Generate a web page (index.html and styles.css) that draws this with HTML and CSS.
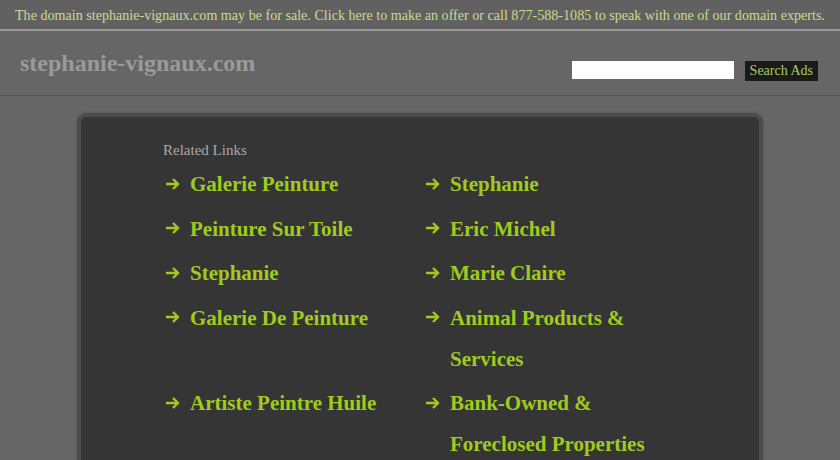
FILE: index.html
```html
<!DOCTYPE html>
<html>
<head>
<meta charset="utf-8">
<link rel="stylesheet" href="styles.css">
</head>
<body>
<div class="topbar">The domain stephanie-vignaux.com may be for sale. Click here to make an offer or call 877-588-1085 to speak with one of our domain experts.</div>
<div class="header">
  <div class="domain">stephanie-vignaux.com</div>
  <form class="search">
    <input class="search-input" type="text">
    <button class="search-btn" type="button">Search Ads</button>
  </form>
</div>
<div class="main">
  <div class="box">
    <div class="related">Related Links</div>
    <div class="cols">
      <ul class="links">
        <li><span class="arr"><svg viewBox="0 0 16 14" width="16" height="14"><path d="M1 7H13M8 2L13 7L8 12" fill="none" stroke="#9fcb1f" stroke-width="2.4"/></svg></span><span class="txt">Galerie Peinture</span></li>
        <li><span class="arr"><svg viewBox="0 0 16 14" width="16" height="14"><path d="M1 7H13M8 2L13 7L8 12" fill="none" stroke="#9fcb1f" stroke-width="2.4"/></svg></span><span class="txt">Peinture Sur Toile</span></li>
        <li><span class="arr"><svg viewBox="0 0 16 14" width="16" height="14"><path d="M1 7H13M8 2L13 7L8 12" fill="none" stroke="#9fcb1f" stroke-width="2.4"/></svg></span><span class="txt">Stephanie</span></li>
        <li><span class="arr"><svg viewBox="0 0 16 14" width="16" height="14"><path d="M1 7H13M8 2L13 7L8 12" fill="none" stroke="#9fcb1f" stroke-width="2.4"/></svg></span><span class="txt">Galerie De Peinture</span></li>
        <li class="spacer"></li>
        <li><span class="arr"><svg viewBox="0 0 16 14" width="16" height="14"><path d="M1 7H13M8 2L13 7L8 12" fill="none" stroke="#9fcb1f" stroke-width="2.4"/></svg></span><span class="txt">Artiste Peintre Huile</span></li>
      </ul>
      <ul class="links">
        <li><span class="arr"><svg viewBox="0 0 16 14" width="16" height="14"><path d="M1 7H13M8 2L13 7L8 12" fill="none" stroke="#9fcb1f" stroke-width="2.4"/></svg></span><span class="txt">Stephanie</span></li>
        <li><span class="arr"><svg viewBox="0 0 16 14" width="16" height="14"><path d="M1 7H13M8 2L13 7L8 12" fill="none" stroke="#9fcb1f" stroke-width="2.4"/></svg></span><span class="txt">Eric Michel</span></li>
        <li><span class="arr"><svg viewBox="0 0 16 14" width="16" height="14"><path d="M1 7H13M8 2L13 7L8 12" fill="none" stroke="#9fcb1f" stroke-width="2.4"/></svg></span><span class="txt">Marie Claire</span></li>
        <li><span class="arr"><svg viewBox="0 0 16 14" width="16" height="14"><path d="M1 7H13M8 2L13 7L8 12" fill="none" stroke="#9fcb1f" stroke-width="2.4"/></svg></span><span class="txt">Animal Products &amp; Services</span></li>
        <li><span class="arr"><svg viewBox="0 0 16 14" width="16" height="14"><path d="M1 7H13M8 2L13 7L8 12" fill="none" stroke="#9fcb1f" stroke-width="2.4"/></svg></span><span class="txt">Bank-Owned &amp; Foreclosed Properties</span></li>
      </ul>
    </div>
  </div>
</div>
</body>
</html>
```
FILE: styles.css
```css
html, body {
  margin: 0;
  padding: 0;
}
body {
  background: #666666;
  font-family: "Liberation Serif", "DejaVu Serif", serif;
  width: 840px;
  height: 460px;
  overflow: hidden;
}
.topbar {
  height: 31px;
  box-sizing: border-box;
  padding-top: 7px;
  padding-left: 15px;
  background: #616161;
  color: #c9dc8c;
  font-size: 14.1px;
  line-height: 17px;
  white-space: nowrap;
  border-bottom: 2px solid #999999;
}
.header {
  height: 65px;
  box-sizing: border-box;
  display: flex;
  justify-content: space-between;
  align-items: flex-start;
  padding: 19px 22px 0 20px;
  border-bottom: 1px solid #555555;
  background: #666666;
}
.domain {
  color: #9a9a9a;
  font-size: 24px;
  font-weight: bold;
  line-height: 27px;
}
.search {
  display: flex;
  align-items: flex-start;
  margin: 11px 0 0 0;
  gap: 11px;
}
.search-input {
  width: 162px;
  height: 18px;
  box-sizing: border-box;
  border: 0;
  padding: 0;
  margin: 0;
  background: #ffffff;
}
.search-btn {
  height: 20px;
  box-sizing: border-box;
  padding: 0 5px;
  margin: 0;
  border: 0;
  background: #1a1a1a;
  color: #a9cc62;
  font-family: "Liberation Serif", "DejaVu Serif", serif;
  font-size: 14px;
  line-height: 20px;
}
.main {
  padding-top: 17px;
  height: 364px;
  box-sizing: border-box;
  overflow: hidden;
  display: flex;
  justify-content: center;
  align-items: flex-start;
}
.box {
  width: 686px;
  height: 380px;
  flex: none;
  box-sizing: border-box;
  overflow: hidden;
  background: #353535;
  border: 4px solid #4c4c4c;
  border-radius: 9px;
  box-shadow: 0 0 2px 1px #5c5c5c;
  padding: 24px 0 0 82px;
}
.related {
  color: #a8a8a8;
  font-size: 15px;
  line-height: 18px;
  margin-bottom: 5px;
}
.cols {
  display: flex;
}
.links {
  list-style: none;
  margin: 0;
  padding: 0;
  width: 260px;
}
.links li {
  display: flex;
  align-items: flex-start;
  margin-bottom: 3.5px;
  line-height: 41px;
}
.links li.spacer {
  height: 41px;
  margin-bottom: 0;
}
.arr {
  width: 27px;
  flex: none;
  height: 41px;
  display: flex;
  align-items: center;
  padding-left: 2px;
  box-sizing: border-box;
}
.arr svg {
  display: block;
  margin-top: -2px;
}
.txt {
  color: #9fcb1f;
  font-size: 21px;
  font-weight: bold;
  width: 210px;
}
```
